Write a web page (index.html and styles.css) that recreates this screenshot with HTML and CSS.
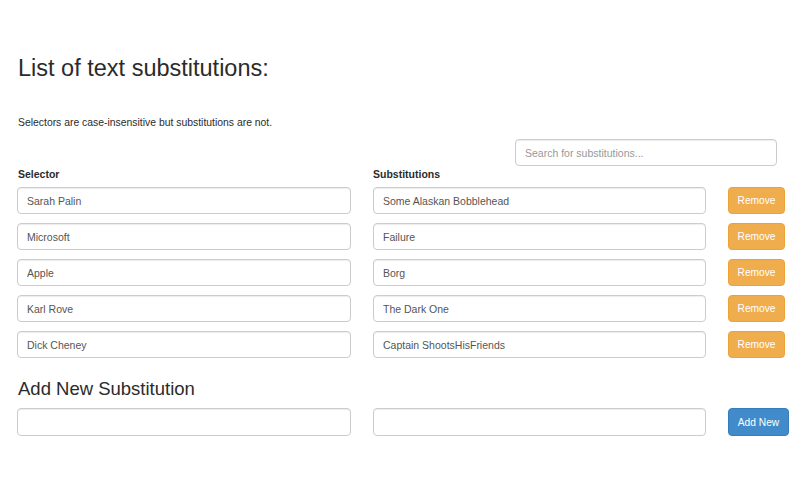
FILE: index.html
```html
<!DOCTYPE html>
<html>
<head>
<meta charset="utf-8">
<link rel="stylesheet" href="styles.css">
</head>
<body>
<div class="page">
  <h1 class="title">List of text substitutions:</h1>
  <p class="note">Selectors are case-insensitive but substitutions are not.</p>
  <div class="search-row">
    <input class="field search" type="text" placeholder="Search for substitutions...">
  </div>
  <div class="grid">
    <div class="label">Selector</div>
    <div class="label">Substitutions</div>
    <div></div>

    <input class="field" type="text" value="Sarah Palin">
    <input class="field" type="text" value="Some Alaskan Bobblehead">
    <button class="btn btn-remove">Remove</button>

    <input class="field" type="text" value="Microsoft">
    <input class="field" type="text" value="Failure">
    <button class="btn btn-remove">Remove</button>

    <input class="field" type="text" value="Apple">
    <input class="field" type="text" value="Borg">
    <button class="btn btn-remove">Remove</button>

    <input class="field" type="text" value="Karl Rove">
    <input class="field" type="text" value="The Dark One">
    <button class="btn btn-remove">Remove</button>

    <input class="field" type="text" value="Dick Cheney">
    <input class="field" type="text" value="Captain ShootsHisFriends">
    <button class="btn btn-remove">Remove</button>
  </div>
  <h2 class="subtitle">Add New Substitution</h2>
  <div class="grid add">
    <input class="field tall" type="text">
    <input class="field tall" type="text">
    <button class="btn btn-add">Add New</button>
  </div>
</div>
</body>
</html>
```
FILE: styles.css
```css
html, body {
  margin: 0;
  padding: 0;
  background: #ffffff;
}
body {
  font-family: "Liberation Sans", Arial, Helvetica, sans-serif;
  color: #333333;
}
.page {
  padding: 0 0 0 17px;
}
.title {
  margin: 55px 0 0 1px;
  font-size: 23.5px;
  line-height: 26px;
  font-weight: 400;
  color: #2b2b2b;
}
.note {
  margin: 34px 0 0 1px;
  font-size: 10.4px;
  line-height: 15px;
  color: #2b2b2b;
}
.search-row {
  display: flex;
  justify-content: flex-end;
  width: 760px;
  margin-top: 9px;
}
.field {
  box-sizing: border-box;
  height: 27px;
  border: 1px solid #cccccc;
  border-radius: 4px;
  box-shadow: inset 0 1px 1px rgba(0,0,0,0.075);
  padding: 0 9px;
  font-family: "Liberation Sans", Arial, Helvetica, sans-serif;
  font-size: 10.5px;
  color: #555555;
  background: #ffffff;
  margin: 0;
  outline: none;
}
.field::placeholder {
  color: #999999;
}
.search {
  width: 262px;
  height: 27px;
}
.grid {
  display: grid;
  grid-template-columns: 334px 333px auto;
  column-gap: 22px;
  row-gap: 9px;
  margin-top: 1px;
  justify-items: start;
}
.grid .field {
  width: 100%;
}
.label {
  font-size: 10.5px;
  line-height: 15px;
  font-weight: 700;
  margin: 0 0 -4px 1px;
  color: #2b2b2b;
}
.label + .label {
  margin-left: 0;
}
.btn {
  box-sizing: border-box;
  border-radius: 4px;
  font-family: "Liberation Sans", Arial, Helvetica, sans-serif;
  font-size: 10.2px;
  color: #ffffff;
  padding: 0;
  margin: 0;
  cursor: pointer;
}
.btn-remove {
  width: 57px;
  height: 27px;
  background: #f0ad4e;
  border: 1px solid #eea236;
}
.subtitle {
  margin: 21px 0 0 1px;
  font-size: 18.5px;
  line-height: 20px;
  font-weight: 400;
  color: #2b2b2b;
}
.add {
  margin-top: 9px;
}
.tall {
  height: 28px;
}
.btn-add {
  width: 61px;
  height: 28px;
  background: #428bca;
  border: 1px solid #357ebd;
}
```
